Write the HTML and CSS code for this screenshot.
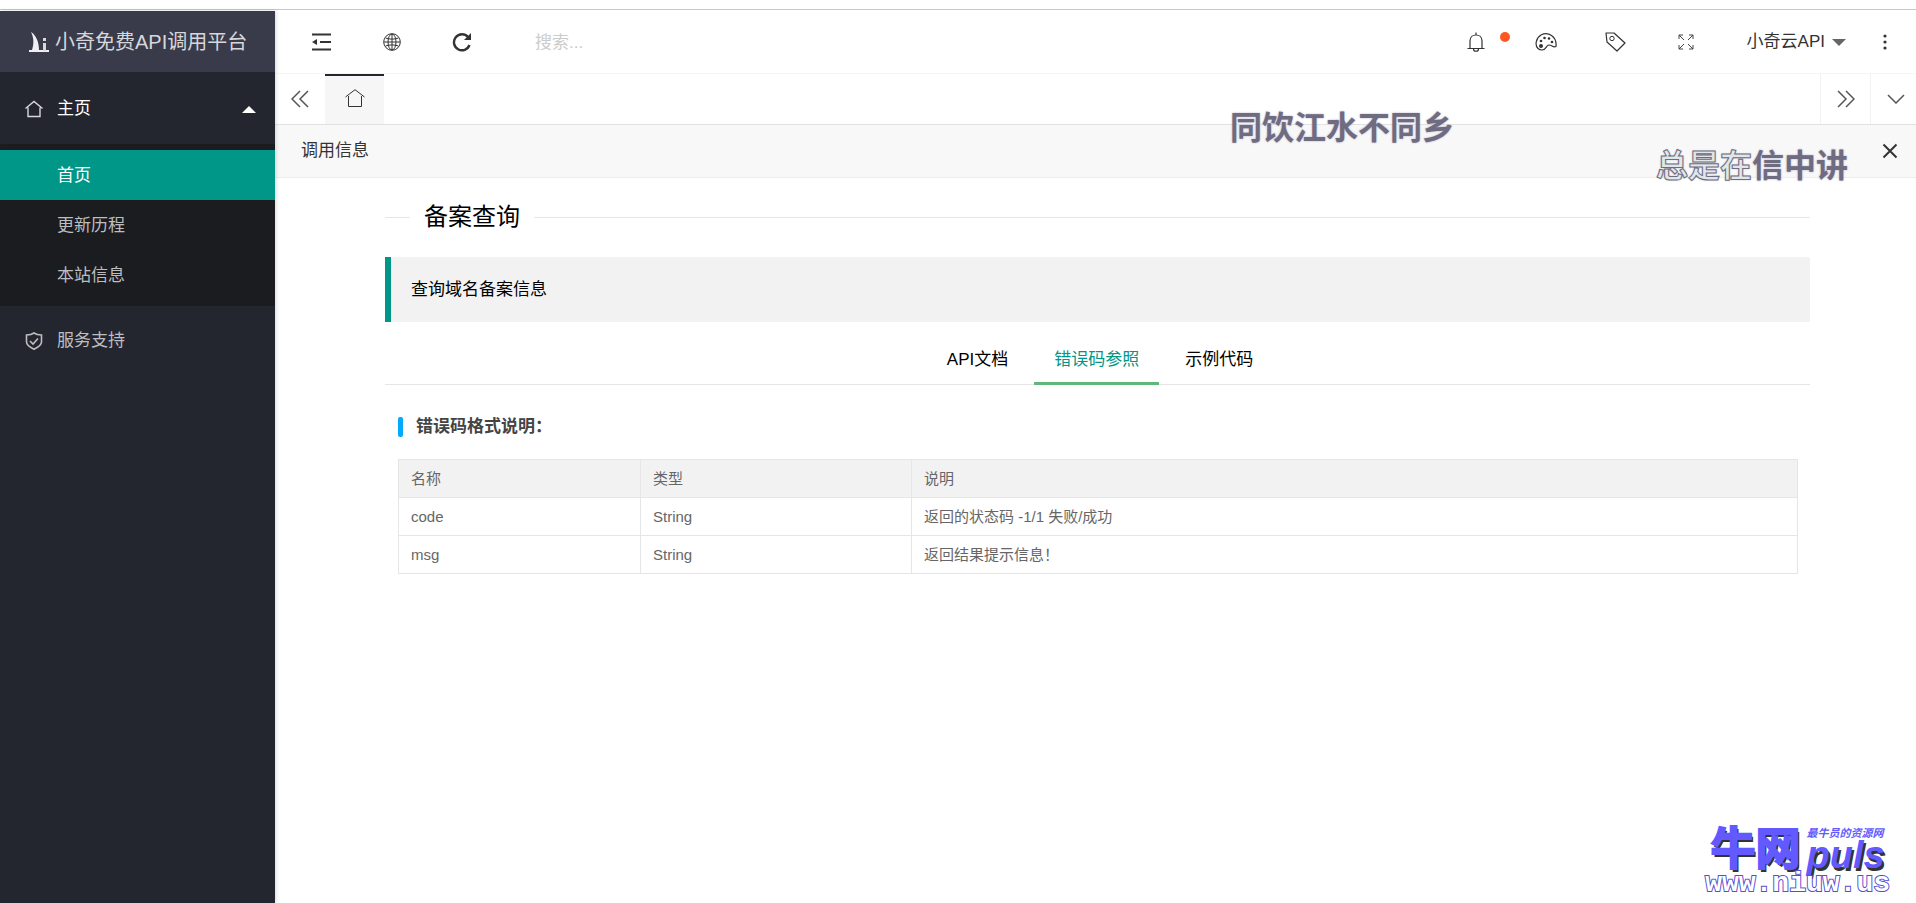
FILE: index.html
```html
<!DOCTYPE html>
<html lang="zh-CN">
<head>
<meta charset="utf-8">
<title>小奇免费API调用平台</title>
<link rel="stylesheet" href="styles.css">
</head>
<body>
<div class="app">
  <aside class="sidebar">
    <a class="brand" href="#">
      <svg width="20" height="20" viewBox="0 0 20 20"><path d="M0 18h20v2H0zM2 0c5 3 8 10 8 18H3C5 12 5 6 2 0z" fill="#f0f0f2"/><path d="M14 11h3v8h-3zM14 6h3v3h-3z" fill="#d8d8dc"/></svg>
      <span>小奇免费API调用平台</span>
    </a>
    <nav class="menu">
      <a class="menu-item menu-open" href="#">
        <svg class="menu-icon" width="18" height="18" viewBox="0 0 18 18"><path d="M0.500 8.500L9 1.500l8.500 7M3 7.500v9h12v-9" fill="none" stroke="#d8d8da" stroke-width="1.400"/></svg>
        <span>主页</span>
        <i class="caret-up"></i>
      </a>
      <div class="submenu">
        <a class="submenu-item active" href="#">首页</a>
        <a class="submenu-item" href="#">更新历程</a>
        <a class="submenu-item" href="#">本站信息</a>
      </div>
      <a class="menu-item" href="#">
        <svg class="menu-icon" width="18" height="18" viewBox="0 0 18 18"><path d="M9 1c2 1.500 5 2 7.500 2v7c0 3.500-4 5.500-7.500 7.200C5.500 15.500 1.500 13.500 1.500 10V3C4 3 7 2.500 9 1zM5 9l3 3 5-5.500" fill="none" stroke="currentColor" stroke-width="1.600"/></svg>
        <span>服务支持</span>
      </a>
    </nav>
  </aside>

  <main class="main">
    <header class="topbar">
      <button class="tool" aria-label="收起菜单"><svg width="20" height="18" viewBox="0 0 20 18"><path d="M0 1.500h19M8 9h11M0 16.500h19" stroke="#333" stroke-width="2"/><path d="M0 9l5-3v6z" fill="#333"/></svg></button>
      <button class="tool" aria-label="网站"><svg width="18" height="18" viewBox="0 0 18 18"><g fill="none" stroke="#333"><circle cx="9" cy="9" r="8.300"/><ellipse cx="9" cy="9" rx="4" ry="8"/><path d="M9 1v16M1 9h16M2.500 5c4 1.500 9 1.500 13 0M2.500 13c4-1.500 9-1.500 13 0"/></g></svg></button>
      <button class="tool" aria-label="刷新"><svg width="20" height="20" viewBox="0 0 20 20"><path d="M16 5a8 8 0 1 0 1.500 8" fill="none" stroke="#333" stroke-width="2.400"/><path d="M19 1v7h-7z" fill="#333"/></svg></button>
      <input class="search" type="text" placeholder="搜索..." aria-label="搜索">
      <div class="tools-right">
        <button class="tool" aria-label="消息"><svg width="18" height="20" viewBox="0 0 18 20"><path d="M3 16V9c0-8 12-8 12 0v7M0.500 16.500h17M6.500 17c0 3 5 3 5 0M9 0.500v2.500" fill="none" stroke="#333" stroke-width="1.200"/></svg><i class="dot"></i></button>
        <button class="tool" aria-label="主题"><svg width="22" height="18" viewBox="0 0 22 18"><path d="M3 15.500C-0.500 12 1 5 6 2c7-3.500 16 1 15 11.500C18 15 17 12 14 12c-3 0-2.500 5-7 5-1.500 0-3-0.500-4-1.500z" fill="none" stroke="#333" stroke-width="1.200"/><g fill="#333"><circle cx="6" cy="13" r="2"/><circle cx="6" cy="8" r="1.300"/><circle cx="9.500" cy="5" r="1.300"/><circle cx="14" cy="5.500" r="1.300"/><circle cx="17" cy="9" r="1.300"/></g></svg></button>
        <button class="tool" aria-label="便签"><svg width="21" height="20" viewBox="0 0 21 20"><path d="M1 1h8l11 10-8 8L2 10z" fill="none" stroke="#333" stroke-width="1.200" stroke-linejoin="round"/><circle cx="7" cy="6.500" r="2.200" fill="none" stroke="#333"/></svg></button>
        <button class="tool" aria-label="全屏"><svg width="16" height="16" viewBox="0 0 16 16"><path d="M1 5V1h4M1 1l5 5M11 1h4v4M15 1l-5 5M1 11v4h4M1 15l5-5M15 11v4h-4M15 15l-5-5" fill="none" stroke="#444"/></svg></button>
        <button class="user">小奇云API<i class="caret-down"></i></button>
        <button class="more" aria-label="更多"><svg width="4" height="16" viewBox="0 0 4 16"><g fill="#333"><circle cx="2" cy="2" r="1.600"/><circle cx="2" cy="8" r="1.600"/><circle cx="2" cy="14" r="1.600"/></g></svg></button>
      </div>
    </header>

    <div class="pagetabs">
      <button class="tab-control" aria-label="向左"><svg width="18" height="18" viewBox="0 0 18 18"><path d="M9 1L1 9l8 8M17 1L9 9l8 8" fill="none" stroke="#555" stroke-width="1.500"/></svg></button>
      <button class="home-tab" aria-label="首页标签"><svg width="20" height="18" viewBox="0 0 20 18"><path d="M0.500 8L10 0.700 19.500 8M3.500 7v10.500h13V7" fill="none" stroke="#333"/></svg></button>
      <span class="spacer"></span>
      <button class="tab-control ruled" aria-label="向右"><svg width="18" height="18" viewBox="0 0 18 18"><path d="M1 1l8 8-8 8M9 1l8 8-8 8" fill="none" stroke="#555" stroke-width="1.500"/></svg></button>
      <button class="tab-control ruled last" aria-label="展开"><svg width="18" height="10" viewBox="0 0 18 10"><path d="M1 1l8 8 8-8" fill="none" stroke="#555" stroke-width="1.500"/></svg></button>
    </div>

    <div class="panel-head">
      <span>调用信息</span>
      <button class="close" aria-label="关闭"><svg width="16" height="16" viewBox="0 0 16 16"><path d="M1.500 1.500l13 13M14.500 1.500l-13 13" stroke="#333" stroke-width="2"/></svg></button>
    </div>

    <section class="content">
      <h1 class="title">备案查询</h1>
      <blockquote class="quote">查询域名备案信息</blockquote>
      <div class="tabs" role="tablist">
        <button class="tab" role="tab">API文档</button>
        <button class="tab selected" role="tab" aria-selected="true">错误码参照</button>
        <button class="tab" role="tab">示例代码</button>
      </div>
      <div class="tab-body">
        <h2 class="subtitle">错误码格式说明：</h2>
        <table class="codes">
          <colgroup><col class="col-name"><col class="col-type"><col></colgroup>
          <thead><tr><th>名称</th><th>类型</th><th>说明</th></tr></thead>
          <tbody>
            <tr><td>code</td><td>String</td><td>返回的状态码 -1/1 失败/成功</td></tr>
            <tr><td>msg</td><td>String</td><td>返回结果提示信息！</td></tr>
          </tbody>
        </table>
      </div>
    </section>
  </main>
</div>

<div class="lyric lyric-first">同饮江水不同乡</div>
<div class="lyric lyric-second"><span class="unsung">总是在</span>信中讲</div>

<div class="watermark">
  <div class="mark-top">
    <span class="mark-cn">牛网</span>
    <span class="mark-side"><small>最牛员的资源网</small><b>puls</b></span>
  </div>
  <div class="mark-url">www.niuw.us</div>
</div>
</body>
</html>
```
FILE: styles.css
```css
* { box-sizing: border-box; }

body {
  margin: 0;
  padding-top: 9px;
  background: #fff;
  color: #333;
  font-family: "Liberation Sans", "Noto Sans CJK SC", sans-serif;
  font-size: 17px;
  line-height: 24px;
}

a { color: inherit; text-decoration: none; }

button {
  border: 0;
  padding: 0;
  background: none;
  color: inherit;
  font: inherit;
  display: flex;
  align-items: center;
  justify-content: center;
}

svg { display: block; flex: none; }

.app {
  display: flex;
  min-height: calc(100vh - 9px);
  border-top: 1px solid #c8c8c8;
  padding-top: 1px;
}

/* Sidebar */
.sidebar {
  width: 275px;
  flex: none;
  background: #23262e;
  color: #bdbec0;
  box-shadow: 1px 0 4px rgba(0, 0, 0, 0.15);
  z-index: 1;
}

.brand {
  display: flex;
  align-items: center;
  gap: 6px;
  height: 61px;
  padding: 0 29px;
  background: #393b4a;
  color: #d7d7db;
  font-size: 20px;
  white-space: nowrap;
}

.menu { padding-top: 2px; }

.menu-item {
  display: flex;
  align-items: center;
  gap: 14px;
  height: 70px;
  padding: 0 19px 0 25px;
}

.menu-open { color: #fff; }

.caret-up {
  margin-left: auto;
  border: 7px solid transparent;
  border-top: 0;
  border-bottom: 7px solid #fff;
}

.submenu {
  padding: 6px 0;
  background: #1b1c20;
  border-radius: 2px;
}

.submenu-item {
  display: flex;
  align-items: center;
  height: 50px;
  padding-top: 2px;
  padding-left: 57px;
}

.active { background: #009688; color: #fff; }

/* Header */
.main { flex: 1; min-width: 0; }

.topbar {
  display: flex;
  align-items: center;
  height: 63px;
  padding: 0 14px 0 12px;
  border-bottom: 1px solid #f6f6f6;
}

.tool { position: relative; width: 70px; height: 60px; }

.search {
  width: 220px;
  margin-left: 38px;
  padding: 2px 0 0;
  border: 0;
  outline: 0;
  font: inherit;
}

.search::placeholder { color: #ccc; }

.tools-right { display: flex; align-items: center; margin-left: auto; }

.dot {
  position: absolute;
  top: 20px;
  right: 1px;
  width: 10px;
  height: 10px;
  border-radius: 50%;
  background: #ff5722;
}

.user { gap: 7px; margin-left: 26px; }

.caret-down {
  border: 7px solid transparent;
  border-bottom: 0;
  border-top: 7px solid #666;
}

.more { width: 34px; height: 60px; margin-left: 22px; }

/* Page tabs */
.pagetabs {
  display: flex;
  height: 51px;
  border-bottom: 1px solid #e2e2e2;
}

.tab-control { width: 50px; }
.ruled { border-left: 1px solid #f2f2f2; }
.last { width: 46px; padding-left: 4px; }

.home-tab {
  width: 59px;
  padding-bottom: 4px;
  background: #f6f6f6;
  border-top: 2px solid #23262e;
}

.spacer { flex: 1; }

/* Panel */
.panel-head {
  display: flex;
  align-items: center;
  justify-content: space-between;
  height: 53px;
  padding: 0 18px 0 26px;
  background: #f8f8f8;
  border-bottom: 1px solid #eee;
}

.content { padding: 19px 106px 40px 110px; color: #000; }

.title {
  display: flex;
  align-items: center;
  gap: 14px;
  margin: 0;
  font-size: 24px;
  font-weight: 400;
  line-height: 40px;
}

.title::before,
.title::after { content: ""; height: 1px; background: #e6e6e6; }
.title::before { width: 25px; }
.title::after { flex: 1; }

.quote {
  margin: 20px 0 10px;
  padding: 20px;
  border-left: 6px solid #009688;
  border-radius: 0 2px 2px 0;
  background: #f2f2f2;
  line-height: 25px;
}

.tabs {
  display: flex;
  justify-content: center;
  gap: 6px;
  padding-left: 5px;
  border-bottom: 1px solid #e6e6e6;
}

.tab { height: 52px; padding: 3px 20px 0; }

.selected {
  color: #009688;
  box-shadow: inset 0 -2px #5fb878, 0 1px #5fb878;
}

.tab-body { padding: 32px 12px 0 13px; }

.subtitle {
  display: flex;
  align-items: center;
  gap: 13px;
  margin: 0 0 22px;
  color: #444;
  font-size: 17px;
  line-height: 20px;
}

.subtitle::before {
  content: "";
  width: 5px;
  height: 20px;
  border-radius: 2px;
  background: #01aaff;
}

.codes {
  width: 100%;
  border-collapse: collapse;
  table-layout: fixed;
  color: #666;
  font-size: 15px;
  line-height: 20px;
}

.col-name { width: 242px; }
.col-type { width: 271px; }

.codes th,
.codes td {
  height: 38px;
  padding: 8px 12px;
  border: 1px solid #e6e6e6;
  text-align: left;
  font-weight: 400;
}

.codes th { background: #f2f2f2; }

/* Floating lyrics */
.lyric {
  position: absolute;
  z-index: 2;
  color: #6f6b80;
  font-size: 32px;
  font-weight: 700;
  line-height: 36px;
  white-space: nowrap;
  text-shadow: 0 0 2px #aaa6c0;
}

.lyric-first { top: 110px; right: 462px; }
.lyric-second { top: 148px; right: 68px; }

.unsung { color: #dfe8e8; -webkit-text-stroke: 1px #6f6b80; }

/* Site watermark */
.watermark {
  position: absolute;
  right: 26px;
  bottom: 6px;
  z-index: 2;
  color: #6259ff;
  font-weight: 700;
}

.mark-top {
  display: flex;
  align-items: flex-end;
  justify-content: center;
  gap: 6px;
  text-shadow: 2px 3px #333;
}

.mark-cn { font-size: 45px; line-height: 42px; -webkit-text-stroke: 2px #6259ff; }

.mark-side { display: flex; flex-direction: column; font-style: italic; }
.mark-side small { font-size: 11px; line-height: 12px; text-shadow: none; }
.mark-side b { font-size: 38px; line-height: 32px; }

.mark-url {
  color: #fff;
  font-family: "Liberation Mono", monospace;
  font-size: 28px;
  line-height: 26px;
  -webkit-text-stroke: 2px #554fd0;
  paint-order: stroke fill;
}
```
